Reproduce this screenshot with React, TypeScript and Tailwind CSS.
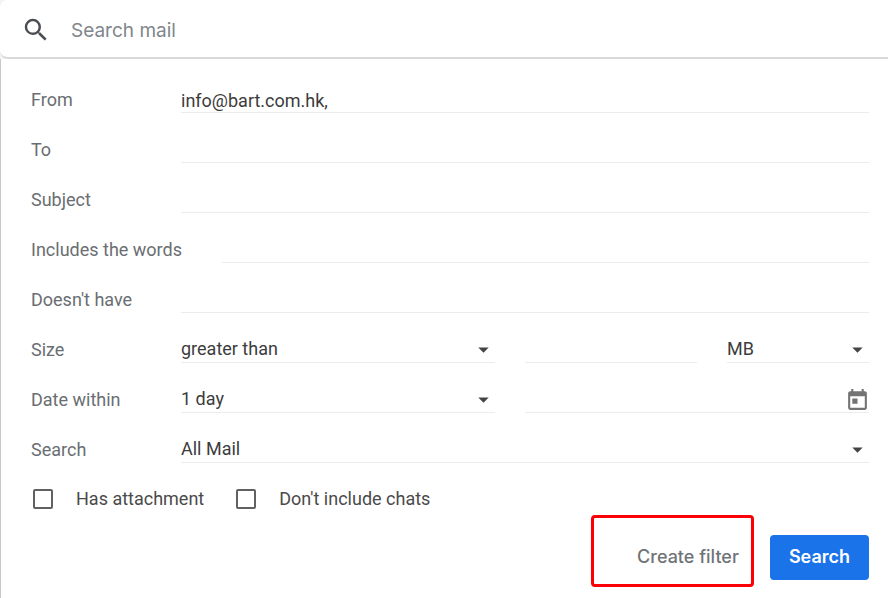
import { ReactNode } from "react";
import { MdArrowDropDown, MdSearch, MdToday } from "react-icons/md";

const fieldClass =
	"block h-[26px] w-full min-w-0 rounded-none border-b border-[#e9edf0] bg-transparent text-lg leading-6 text-[#3c3c3c] outline-none";

const Row = ({ id, label, children }: { id: string; label: string; children: ReactNode }) => {
	return (
		<div className="flex h-[50px] items-end">
			<label htmlFor={id} className="h-[25px] min-w-[150px] shrink-0 pr-10 text-lg leading-6 text-[#6a6e72]">
				{label}
			</label>
			<div className="min-w-0 flex-1">{children}</div>
		</div>
	);
};

const TextField = ({ id, label, value }: { id: string; label: string; value?: string }) => {
	return (
		<Row id={id} label={label}>
			<input id={id} type="text" defaultValue={value} className={`${fieldClass} pt-px`} />
		</Row>
	);
};

const Select = ({ id, label, options }: { id: string; label?: string; options: string[] }) => {
	return (
		<div className="relative">
			<select id={id} aria-label={label} className={`${fieldClass} appearance-none pb-0.5`}>
				{options.map(option => (
					<option key={option}>{option}</option>
				))}
			</select>
			<MdArrowDropDown size={25} className="pointer-events-none absolute top-0 -right-px text-[#444]" />
		</div>
	);
};

const Checkbox = ({ label }: { label: string }) => {
	return (
		<label className="flex items-center gap-[23px] text-lg leading-6 text-[#4a4a4a]">
			<input
				type="checkbox"
				className="size-5 appearance-none rounded-xs border-2 border-[#5f6163] checked:bg-[#5f6163]"
			/>
			{label}
		</label>
	);
};

export default function App() {
	return (
		<div className="flex min-h-screen flex-col bg-[#f4f4f4] font-['Roboto',sans-serif]">
			<header className="flex h-[59px] items-center rounded-l-lg border-b-2 border-[#d9d9d9] bg-white pt-0.5 pl-[21px]">
				<label htmlFor="search-mail" aria-label="Search mail" className="mr-5 text-[#4a4e52]">
					<MdSearch size={30} />
				</label>
				<input
					id="search-mail"
					type="search"
					placeholder="Search mail"
					className="min-w-0 flex-1 pt-0.5 font-['Inter',sans-serif] text-[19px] leading-7 outline-none placeholder:text-[#80868b]"
				/>
			</header>
			<form className="flex-1 border-l border-[#c8c8c8] bg-white pt-1 pr-[19px] pl-[30px]">
				<TextField id="from" label="From" value="info@bart.com.hk," />
				<TextField id="to" label="To" />
				<TextField id="subject" label="Subject" />
				<TextField id="includes" label="Includes the words" />
				<TextField id="excludes" label="Doesn't have" />
				<Row id="size" label="Size">
					<div className="grid grid-cols-[314fr_172fr_142fr] gap-[30px]">
						<Select id="size" options={["greater than", "less than"]} />
						<input type="text" aria-label="Size value" className={fieldClass} />
						<Select id="unit" label="Size unit" options={["MB", "KB", "Bytes"]} />
					</div>
				</Row>
				<Row id="within" label="Date within">
					<div className="grid grid-cols-[314fr_172fr_142fr] gap-[30px]">
						<Select id="within" options={["1 day", "3 days", "1 week", "2 weeks", "1 month"]} />
						<div className="relative col-span-2">
							<input type="text" aria-label="Date" className={fieldClass} />
							<button type="button" aria-label="Pick a date" className="absolute -right-px bottom-0 text-[#737373]">
								<MdToday size={25} />
							</button>
						</div>
					</div>
				</Row>
				<Row id="folder" label="Search">
					<Select id="folder" options={["All Mail", "Inbox", "Sent Mail", "Spam"]} />
				</Row>
				<div className="mt-6 flex gap-8 pl-0.5">
					<Checkbox label="Has attachment" />
					<Checkbox label="Don't include chats" />
				</div>
				<div className="mt-6 flex justify-end gap-[19px] pb-[18px] font-['Inter',sans-serif] text-lg leading-6">
					<div className="relative">
						<button type="button" className="h-[45px] px-3 pb-0.5 font-medium text-[#6f7377]">
							Create filter
						</button>
						<div className="pointer-events-none absolute -top-5 -right-[3px] -bottom-[7px] -left-[34px] rounded-sm border-3 border-[#fb0007]" />
					</div>
					<button type="submit" className="h-[45px] rounded-sm bg-[#1a73e8] px-[19px] pb-0.5 font-semibold text-white">
						Search
					</button>
				</div>
			</form>
		</div>
	);
}
